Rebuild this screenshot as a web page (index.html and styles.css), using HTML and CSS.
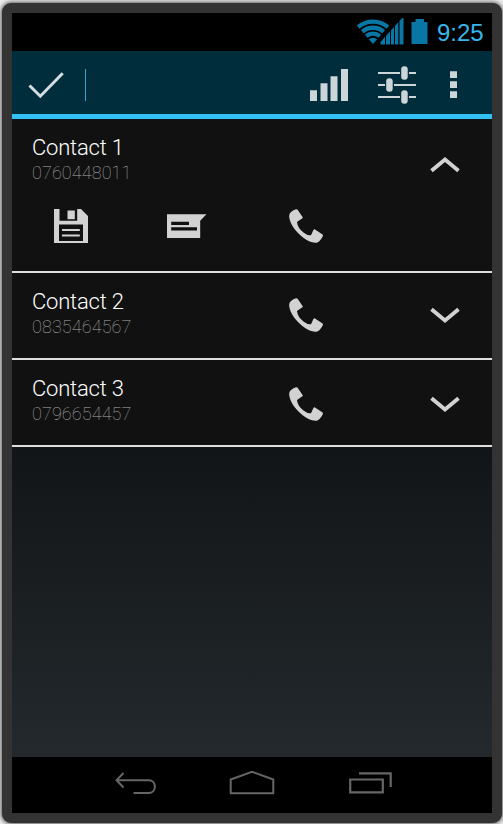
FILE: index.html
```html
<!DOCTYPE html>
<html lang="en">
<head>
<meta charset="utf-8">
<title>Contacts</title>
<link rel="stylesheet" href="styles.css">
</head>
<body>
<svg class="defs" aria-hidden="true">
  <symbol id="phone" viewBox="0 0 34 34"><path d="M7 .2Q8 0 8.600 .8L13.700 8.200Q13.800 9 13 9.600L8 13Q8.600 19 14.500 23.500Q19 27 22 26.200L24.300 21.200Q25 20 26 20.400L33.200 25.200Q34.300 26 33.700 27.500Q32.500 30 30 32.500C26.500 35.500 19 32.500 14 28.500C7 23 1 15.500 .2 8Q-.2 5 2 3Q4.500 1 7 .2Z" fill="currentColor"/></symbol>
  <symbol id="chevron" viewBox="0 0 30 16"><path d="M1.500 2.200L15 13.400L28.500 2.200" fill="none" stroke="currentColor" stroke-width="3.900"/></symbol>
</svg>
<main class="device">
  <header class="status">
    <svg width="48" height="28" viewBox="357 18 48 28">
      <g fill="none" stroke="#0877a5" stroke-width="4.300">
        <path d="M358.100 27.100A22.700 22.700 0 0 1 387.900 27.100"/>
        <path d="M362.300 31.700A16.400 16.400 0 0 1 383.700 31.700"/>
        <path d="M366.200 36.200A10.400 10.400 0 0 1 379.800 36.200"/>
      </g>
      <path d="M368.800 39.200A6.400 6.400 0 0 1 377.200 39.200L373 44Z" fill="#0877a5"/>
      <path d="M380.500 44.500V42L385 36.800V44.500ZM386 44.500V36L390 31.500V44.500ZM391 44.500V30.500L394 27V44.500ZM395 44.500V26L398.300 22.200V44.500ZM399.500 44.500V21L403.500 16.500V44.500Z" fill="#0877a5"/>
    </svg>
    <svg class="battery" width="17" height="25" viewBox="0 0 17 25"><path d="M.5 3H4.500V0H13V3H16.500V25H.5Z" fill="#0877a5"/></svg>
    <time class="clock">9:25</time>
  </header>
  <nav class="actions">
    <svg class="check" width="36" height="28" viewBox="28 71 36 28"><path d="M29.500 85.500L40.300 96.200L62.700 73.200" fill="none" stroke="#d6dde0" stroke-width="3"/></svg>
    <span class="separator"></span>
    <svg class="signal" width="38" height="32" viewBox="0 0 38 32"><path d="M0 21.200H7V32H0ZM10.500 14.200H17.500V32H10.500ZM20.500 7.200H27.500V32H20.500ZM31 0H38V32H31Z" fill="#ccd5d8"/></svg>
    <svg class="sliders" width="38" height="40" viewBox="378 65 38 40">
      <path d="M378 73H400M409 73H416M378 85H385M394 85H416M378 97H400M409 97H416" stroke="#ccd5d8" stroke-width="2"/>
      <g fill="#ccd5d8"><rect x="401.200" y="66.300" width="6.500" height="13.500" rx="3"/><rect x="386.200" y="78.300" width="6.500" height="13.500" rx="3"/><rect x="401.200" y="90.300" width="6.500" height="13.500" rx="3"/></g>
    </svg>
    <svg class="more" width="7" height="27" viewBox="0 0 7 27"><path d="M0 .2H7V7H0ZM0 10.200H7V17H0ZM0 20.200H7V27H0Z" fill="#ccd5d8"/></svg>
  </nav>
  <section class="list">
    <article class="contact expanded">
      <div class="info"><h2>Contact 1</h2><p>0760448011</p></div>
      <svg class="chevron up"><use href="#chevron"/></svg>
      <div class="tools">
        <svg class="save" width="34" height="34" viewBox="0 0 34 34"><path fill-rule="evenodd" d="M0 0H5.500V11.800H23.200V0H27L34 7V34H0ZM5 15.500V32H29V15.500Z" fill="currentColor"/><path d="M13.500 1.500H20.800V10.200H13.500Z" fill="currentColor"/><path d="M8 21H25.800M8 26.600H25.800" stroke="currentColor" stroke-width="2"/></svg>
        <svg class="message" width="40" height="24" viewBox="0 0 40 24"><path fill-rule="evenodd" d="M0 .3H39.500L33.200 6.800V24H0ZM4.200 7.700V11H22V7.700ZM4.200 13.300V16.500H30V13.300Z" fill="currentColor"/></svg>
        <svg class="phone"><use href="#phone"/></svg>
      </div>
    </article>
    <article class="contact">
      <div class="info"><h2>Contact 2</h2><p>0835464567</p></div>
      <svg class="phone"><use href="#phone"/></svg>
      <svg class="chevron"><use href="#chevron"/></svg>
    </article>
    <article class="contact last">
      <div class="info"><h2>Contact 3</h2><p>0796654457</p></div>
      <svg class="phone"><use href="#phone"/></svg>
      <svg class="chevron"><use href="#chevron"/></svg>
    </article>
  </section>
  <footer class="softkeys">
    <svg width="42" height="24" viewBox="115 772 42 24"><path d="M123.500 773L116.500 780.300L123.500 787.500M117 780.300H148.500C157 780.300 157 793 148.500 793H133.500" fill="none" stroke="#666" stroke-width="2"/></svg>
    <svg class="home" width="46" height="24" viewBox="229 771 46 24"><path d="M230.700 793.200V779.500L252 771.800L273.300 779.500V793.200Z" fill="none" stroke="#666" stroke-width="2"/></svg>
    <svg width="43" height="22" viewBox="349 772 43 22"><path d="M350.200 779.500H382.800V792.300H350.200ZM359 773.300H390.700V787" fill="none" stroke="#666" stroke-width="2.200"/></svg>
  </footer>
</main>
</body>
</html>
```
FILE: styles.css
```css
* { box-sizing: border-box; }
body {
  margin: 0;
  padding: 3px 1px 1px 2px;
  height: 824px;
  overflow: hidden;
  background: #eee;
  font-family: Roboto, sans-serif;
}
svg { display: block; flex: none; }
.defs { display: none; }
.device {
  width: 500px;
  height: 820px;
  border: 10px solid #333;
  border-radius: 9px;
  background: #333;
  box-shadow: 0 0 4px 1px #555;
  display: flex;
  flex-direction: column;
}
.status {
  height: 38px;
  background: #000;
  display: flex;
  align-items: flex-start;
  padding: 5px 0 0 345px;
}
.battery { margin: 1px 0 0 6px; }
.clock {
  margin-left: 9px;
  color: #38b6ea;
  font: 24px/29px "Liberation Sans", Arial, sans-serif;
}
.actions {
  height: 68px;
  background: #002d3c;
  border-bottom: 5px solid #33c0f4;
  display: flex;
  align-items: flex-start;
  padding-left: 16px;
}
.check { margin-top: 20px; }
.separator { width: 1px; height: 32px; margin: 18px 0 0 21px; background: #33a5d0; }
.signal { margin: 18px 0 0 224px; }
.sliders { margin: 14px 0 0 30px; }
.more { margin: 20px 0 0 34px; }
.list {
  flex: 1;
  color: #d2d2d2;
  background: linear-gradient(#121517 328px, #23292d 638px);
}
.contact {
  height: 87px;
  padding: 15px 0 0 20px;
  background: #111;
  border-bottom: 2px solid #dedede;
  display: grid;
  grid-template-columns: 257px 141px 30px;
}
.expanded { height: 154px; grid-template-columns: 398px 30px; grid-template-rows: 75px 34px; }
.info { height: 52px; padding-top: 1px; }
h2 {
  margin: 0;
  color: #fff;
  font: 300 22px/26px Roboto, sans-serif;
  letter-spacing: -.2px;
}
p {
  margin: 0;
  color: #aaa;
  font: 100 18px/24px Roboto, sans-serif;
  letter-spacing: .1px;
}
.phone { width: 34px; height: 34px; margin-top: 10px; }
.chevron { width: 30px; height: 16px; margin-top: 19px; }
.last .phone { margin-top: 12px; }
.last .chevron { margin-top: 21px; }
.up { margin-top: 23px; transform: scaleY(-1); }
.tools {
  grid-column: 1 / -1;
  display: flex;
  align-items: flex-start;
  padding-left: 22px;
}
.message { margin: 5px 0 0 79px; }
.tools .phone { margin: 0 0 0 82px; }
.softkeys {
  height: 56px;
  background: #000;
  display: flex;
  align-items: flex-start;
  padding: 15px 0 0 103px;
  gap: 73px;
}
.home { margin: -1px 1px 0 -1px; }
```
